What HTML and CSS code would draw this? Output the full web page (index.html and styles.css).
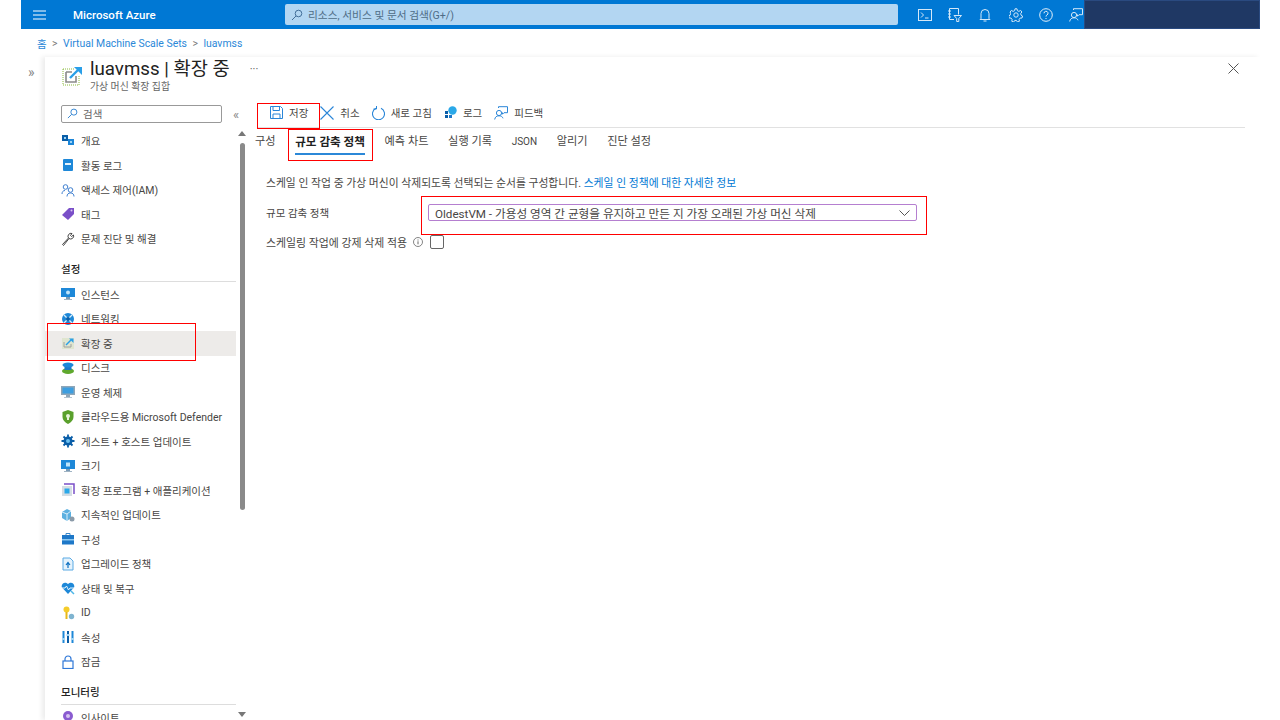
FILE: index.html
```html
<!DOCTYPE html>
<html lang="ko">
<head>
    <meta charset="UTF-8">
    <title>luavmss | 확장 중 - Microsoft Azure</title>
    <link rel="stylesheet" href="styles.css">
</head>
<body>
<div class="page">
    <!-- 상단 바 -->
    <header class="topbar">
        <svg class="hamburger" width="14" height="10" viewBox="0 0 14 10"><path d="M0 1h13M0 5h13M0 9h13" stroke="#fff" stroke-width="1"/></svg>
        <span class="brand">Microsoft Azure</span>
        <div class="globalsearch">
            <svg width="12" height="12" viewBox="0 0 12 12" fill="none" stroke="#44709a"><circle cx="7.5" cy="4.5" r="3.3"/><path d="M5 7l-4 4"/></svg>
            <span>리소스, 서비스 및 문서 검색(G+/)</span>
        </div>
        <div class="topicons">
            <svg width="14" height="14" viewBox="0 0 14 14" fill="none" stroke="#d5e8f8"><rect x=".5" y="1.5" width="13" height="11"/><path d="M3 4.5l2.5 2.500L3 9.500M7 10h3.500"/></svg>
            <svg width="14" height="14" viewBox="0 0 14 14" fill="none" stroke="#d5e8f8"><path d="M1.500 11.500V.5h9v6M1.500 11.500H6M0 3h3M0 6h3M0 9h3M6 7.500h7.500l-2.700 3v3H8.700v-3z"/></svg>
            <svg width="14" height="14" viewBox="0 0 14 14" fill="none" stroke="#d5e8f8"><path d="M3 10.500V5.500a4 4 0 0 1 8 0v5l1 1H2zM5.500 13h3"/></svg>
            <svg width="14" height="14" viewBox="0 0 14 14" fill="none" stroke="#d5e8f8"><circle cx="7" cy="7" r="2.200"/><path d="M6 .8h2l.4 1.900 1.500.7 1.700-1 1.300 1.600-1.200 1.500.3 1.600 1.500.9-.5 2-1.900.1-1 1.300.3 1.900-1.900.7-1.100-1.600h-1.600l-1.100 1.600-1.900-.7.3-1.900-1-1.300-1.900-.1-.5-2 1.500-.9.3-1.600L1.100 4l1.300-1.600 1.700 1 1.500-.7z"/></svg>
            <svg width="14" height="14" viewBox="0 0 14 14" fill="none" stroke="#e4f0fa"><circle cx="7" cy="7" r="6.300"/><path d="M5 5.300a2 2 0 1 1 3 1.700c-.7.4-1 .8-1 1.600M7 10v1"/></svg>
            <svg width="14" height="14" viewBox="0 0 14 14" fill="none" stroke="#d5e8f8"><circle cx="5" cy="7" r="2.600"/><path d="M.7 13.500c.3-2.500 2-3.700 4.300-3.700s3.500 1 4 2.500M4.500 2V.7h9v6H10L8.500 8.200V6.500"/></svg>
        </div>
        <div class="account"></div>
    </header>

    <nav class="breadcrumb">
        <a>홈</a><span class="sep">&gt;</span><a>Virtual Machine Scale Sets</a><span class="sep">&gt;</span><a>luavmss</a>
    </nav>

    <div class="workspace">
        <div class="collapsed">»</div>
        <div class="blade">
            <div class="bladehead">
                <svg class="headicon" width="21" height="21" viewBox="0 0 21 21" fill="none">
                    <path d="M1 4h11M1 4v16h16V10" stroke="#8cbb3f" stroke-dasharray="1 1"/>
                    <path d="M4 7h6M4 7v10h10v-6" stroke="#8a8a8a" stroke-width="1.600"/>
                    <path d="M8 13L17 4" stroke="#2a9fe8" stroke-width="2.400"/>
                    <path d="M12 2h8v8z" fill="#2a9fe8"/>
                </svg>
                <div class="headtext">
                    <h1>luavmss | 확장 중</h1>
                    <p>가상 머신 확장 집합</p>
                </div>
                <span class="more">···</span>
                <svg class="close" width="11" height="11" viewBox="0 0 11 11"><path d="M.5.500l10 10M10.500.500l-10 10" stroke="#555"/></svg>
            </div>

            <div class="bladebody">
                <aside class="sidebar">
                    <div class="sidesearchrow">
                        <div class="sidesearch">
                            <svg width="11" height="11" viewBox="0 0 12 12" fill="none" stroke="#2a7fcf"><circle cx="7.500" cy="4.500" r="3.300"/><path d="M5 7l-4 4"/></svg>
                            <span>검색</span>
                        </div>
                        <span class="collapse">«</span>
                    </div>
                    <ul class="menu">
                        <li><svg viewBox="0 0 14 14"><rect x="1" y="1" width="6" height="6" fill="#0a5ea8"/><rect x="7" y="5" width="6" height="6" fill="#1c86d8"/><rect x="3" y="3" width="2" height="2" fill="#9fd4f5"/><rect x="9" y="7" width="2" height="2" fill="#9fd4f5"/></svg>개요</li>
                        <li><svg viewBox="0 0 14 14"><rect x="2" y="1" width="10" height="12" rx="1" fill="#1e88d8"/><rect x="4" y="5" width="6" height="2" fill="#e8f4fc"/></svg>활동 로그</li>
                        <li><svg viewBox="0 0 14 14" fill="none" stroke="#3f7fd0"><circle cx="4.500" cy="4" r="2.300"/><circle cx="9.500" cy="7" r="2.300"/><path d="M1 11c0-2 1-3.500 3-3.500M6 13.500c0-2.500 1.500-3.500 3.500-3.500s3.500 1 3.500 3.500"/></svg>액세스 제어(IAM)</li>
                        <li><svg viewBox="0 0 14 14"><path d="M1 8l7-7h5v6l-6 6z" fill="#7a4fc8"/><circle cx="10.500" cy="3.500" r="1" fill="#d6c4f0"/></svg>태그</li>
                        <li><svg viewBox="0 0 14 14" fill="none" stroke="#444"><path d="M1.500 12.500l6-6.500a3 3 0 0 1 3.500-4.500L9.500 3.500l1 1 2-1.500a3 3 0 0 1-4.500 3.500l-5.500 7z"/></svg>문제 진단 및 해결</li>
                        <li class="heading">설정</li>
                        <li><svg viewBox="0 0 14 14"><rect x="0" y="1" width="14" height="9" fill="#1e88d8"/><circle cx="7" cy="5.500" r="2" fill="#bfe4fa"/><rect x="5" y="10" width="4" height="2" fill="#7a9ab5"/><rect x="3" y="12" width="8" height="1" fill="#a0b4c4"/></svg>인스턴스</li>
                        <li><svg viewBox="0 0 14 14"><circle cx="7" cy="7" r="6" fill="#1e88d8"/><path d="M3 3l8 8M11 3l-8 8" stroke="#d8eefb" stroke-width="1.300"/><circle cx="7" cy="7" r="2" fill="#0a5ea8"/></svg>네트워킹</li>
                        <li class="selected"><svg viewBox="0 0 14 14" fill="none"><rect x="1" y="2" width="12" height="11" fill="#dfe5cf"/><path d="M3 6v5h7V8" stroke="#a0a0a0"/><path d="M5 9l5-5" stroke="#2a9fe8" stroke-width="1.500"/><path d="M8 2.500h4.500V7z" fill="#2a9fe8"/></svg>확장 중</li>
                        <li><svg viewBox="0 0 14 14"><ellipse cx="7" cy="10" rx="6" ry="3" fill="#5fa82e"/><rect x="3.500" y="3" width="7" height="6" fill="#1e78c8"/><ellipse cx="7" cy="4" rx="5.500" ry="2.500" fill="#1e88d8"/></svg>디스크</li>
                        <li><svg viewBox="0 0 14 14"><rect x="0" y="1" width="14" height="9" fill="#8fa6b8"/><rect x="1.500" y="2.500" width="11" height="6" fill="#3d9ee0"/><rect x="5" y="10" width="4" height="2" fill="#8fa6b8"/><rect x="3" y="12" width="8" height="1" fill="#b5c4d0"/></svg>운영 체제</li>
                        <li><svg viewBox="0 0 14 14"><path d="M7 0l5.500 2v5c0 3-2.500 5.500-5.500 7-3-1.500-5.500-4-5.500-7V2z" fill="#5aa02c"/><circle cx="7" cy="6" r="2" fill="#e6f3d8"/><rect x="6" y="7" width="2" height="3" fill="#e6f3d8"/></svg>클라우드용 Microsoft Defender</li>
                        <li><svg viewBox="0 0 14 14"><circle cx="7" cy="7" r="4.500" fill="#0a5ea8"/><path d="M7 .5v13M.5 7h13M2.500 2.500l9 9M11.500 2.500l-9 9" stroke="#0a5ea8" stroke-width="1.800"/><circle cx="7" cy="7" r="2" fill="#6cc0f0"/></svg>게스트 + 호스트 업데이트</li>
                        <li><svg viewBox="0 0 14 14"><rect x="0" y="1" width="14" height="9" fill="#1e88d8"/><rect x="5" y="3.500" width="4" height="4" fill="#bfe4fa"/><rect x="5" y="10" width="4" height="2" fill="#7a9ab5"/><rect x="3" y="12" width="8" height="1" fill="#a0b4c4"/></svg>크기</li>
                        <li><svg viewBox="0 0 14 14"><path d="M3 1h10v10" fill="none" stroke="#7a4fc8" stroke-width="1.500"/><rect x="1" y="3" width="10" height="10" fill="#d4dde4"/><rect x="3.500" y="5.500" width="5" height="5" fill="#2aa8e8"/></svg>확장 프로그램 + 애플리케이션</li>
                        <li><svg viewBox="0 0 14 14"><path d="M1 4l5-3 4 2v7l-4 3-5-3z" fill="#5cb0e0"/><path d="M6 6v7M1 4l5 2 4-3" stroke="#d8eefb" fill="none"/><circle cx="11" cy="11" r="2.500" fill="#8a9aa8"/></svg>지속적인 업데이트</li>
                        <li><svg viewBox="0 0 14 14"><path d="M5 3V1.500h4V3" fill="none" stroke="#3a86c8"/><rect x="1" y="3" width="12" height="9.500" fill="#1e78c8"/><rect x="1" y="7" width="12" height="1.500" fill="#8cc8f0"/></svg>구성</li>
                        <li><svg viewBox="0 0 14 14"><path d="M2 1h7l3 3v9H2z" fill="#e4f2fc" stroke="#5aaae4"/><path d="M7 11V6M5 8l2-2.500L9 8" fill="none" stroke="#0a6ec0" stroke-width="1.200"/></svg>업그레이드 정책</li>
                        <li><svg viewBox="0 0 14 14"><path d="M7 13L1 6.500C-.5 3.500 3.500-.5 7 3c3.500-3.500 7.500.5 6 3.500z" fill="#1e88d8"/><path d="M1 7h3l1.500-2 2 4L9 7h4" fill="none" stroke="#e4f4fd"/><path d="M10 10l3 3" stroke="#50b8e8" stroke-width="1.500"/></svg>상태 및 복구</li>
                        <li><svg viewBox="0 0 14 14"><circle cx="5.500" cy="3.500" r="3" fill="#f5cc2a"/><rect x="4.500" y="6" width="2" height="7" fill="#e8b818"/><circle cx="10.500" cy="10.500" r="2.700" fill="#7fb4d0"/></svg>ID</li>
                        <li><svg viewBox="0 0 14 14"><rect x="1.500" y="1" width="2" height="12" fill="#1e88d8"/><rect x="6" y="1" width="2" height="12" fill="#0a5ea8"/><rect x="10.500" y="1" width="2" height="12" fill="#1e88d8"/><rect x="1" y="8" width="3" height="2" fill="#9fd4f5"/><rect x="5.500" y="4" width="3" height="2" fill="#9fd4f5"/><rect x="10" y="8" width="3" height="2" fill="#9fd4f5"/></svg>속성</li>
                        <li><svg viewBox="0 0 14 14" fill="none" stroke="#2f78d8" stroke-width="1.200"><rect x="2" y="6" width="10" height="7.500"/><path d="M4 6V4a3 3 0 0 1 6 0v2"/></svg>잠금</li>
                        <li class="heading">모니터링</li>
                        <li><svg viewBox="0 0 14 14"><circle cx="7" cy="6" r="5" fill="#8a5cd0"/><rect x="5" y="10" width="4" height="3" fill="#6a3fb0"/><circle cx="7" cy="6" r="2" fill="#d6c4f0"/></svg>인사이트</li>
                    </ul>
                    <div class="scrollbar">
                        <span class="arrow up"></span>
                        <span class="thumb"></span>
                        <span class="arrow down"></span>
                    </div>
                </aside>

                <main class="content">
                    <div class="toolbar">
                        <button class="tool"><svg width="13" height="13" viewBox="0 0 13 13" fill="none" stroke="#2a86d8"><path d="M.5.500h10l2 2v10H.5z"/><path d="M3 .500v4h6.500v-4M3 12.500V8h7v4.500"/></svg>저장</button>
                        <button class="tool"><svg width="14" height="14" viewBox="0 0 14 14"><path d="M.5.500l13 13M13.500.500l-13 13" stroke="#2a86d8" stroke-width="1.100"/></svg>취소</button>
                        <button class="tool"><svg width="13" height="14" viewBox="0 0 13 14" fill="none" stroke="#2a86d8" stroke-width="1.100"><path d="M4 2.300A6 6 0 1 0 9 2.300"/><path d="M4.500 0v3H1.500" stroke-width="1"/></svg>새로 고침</button>
                        <button class="tool"><svg width="13" height="13" viewBox="0 0 13 13"><circle cx="8.500" cy="4.500" r="4.200" fill="#2aa8e8"/><rect x="1" y="5" width="3" height="3" fill="#0a5ea8"/><rect x="1" y="9" width="3" height="3" fill="#0a5ea8"/><rect x="5" y="9" width="3" height="3" fill="#1e78c8"/></svg>로그</button>
                        <button class="tool"><svg width="14" height="14" viewBox="0 0 14 14" fill="none" stroke="#2a86d8"><circle cx="5" cy="7" r="2.600"/><path d="M.7 13.500c.3-2.500 2-3.700 4.300-3.700s3.500 1 4 2.500M4.500 2V.7h9v6H10L8.500 8.200V6.500"/></svg>피드백</button>
                    </div>
                    <div class="tabs">
                        <a>구성</a>
                        <a class="active">규모 감축 정책</a>
                        <a>예측 차트</a>
                        <a>실행 기록</a>
                        <a class="latin">JSON</a>
                        <a>알리기</a>
                        <a>진단 설정</a>
                    </div>
                    <div class="form">
                        <p class="desc">스케일 인 작업 중 가상 머신이 삭제되도록 선택되는 순서를 구성합니다. <a>스케일 인 정책에 대한 자세한 정보</a></p>
                        <div class="row">
                            <label>규모 감축 정책</label>
                            <div class="select">
                                <span>OldestVM - 가용성 영역 간 균형을 유지하고 만든 지 가장 오래된 가상 머신 삭제</span>
                                <svg width="11" height="6" viewBox="0 0 11 6" fill="none"><path d="M.5.500l5 5 5-5" stroke="#555"/></svg>
                            </div>
                        </div>
                        <div class="row check">
                            <label>스케일링 작업에 강제 삭제 적용</label>
                            <svg class="info" width="10" height="10" viewBox="0 0 10 10" fill="none" stroke="#666"><circle cx="5" cy="5" r="4.500" stroke-width=".8"/><path d="M5 4.300v3M5 2.500v1"/></svg>
                            <span class="checkbox"></span>
                        </div>
                    </div>
                </main>
            </div>
        </div>
    </div>

    <!-- 빨간 강조 표시 -->
    <div class="mark mark-save"></div>
    <div class="mark mark-tab"></div>
    <div class="mark mark-select"></div>
    <div class="mark mark-menu"></div>
</div>
</body>
</html>
```

FILE: styles.css
```css
* {
    box-sizing: border-box;
}

body {
    margin: 0;
    background-color: #fff;
    font-family: Roboto, "Noto Sans CJK KR", sans-serif;
    font-size: 10.5px;
    color: #484644;
}

.page {
    position: relative;
    width: 1239px;
    height: 720px;
    margin-left: 21px;
    overflow: hidden;
}

/* 상단 바 */
.topbar {
    display: flex;
    align-items: center;
    height: 29px;
    background-color: #0078d4;
}

.hamburger {
    margin-left: 12px;
}

.brand {
    width: 212px;
    margin-left: 26px;
    color: #fff;
    font-size: 11.5px;
    font-weight: 500;
}

.globalsearch {
    display: flex;
    align-items: center;
    gap: 5px;
    width: 613px;
    height: 21px;
    padding-left: 6px;
    background-color: #b3d6f2;
    border-radius: 2px;
    color: #4f6d87;
    font-size: 10.7px;
}

.topicons {
    display: flex;
    gap: 16.2px;
    margin-left: 20px;
}

.account {
    position: absolute;
    top: 0;
    right: 0;
    width: 176px;
    height: 29px;
    background-color: #1f3864;
    border: 1px solid #2a4a80;
}

/* 경로 */
.breadcrumb {
    display: flex;
    align-items: center;
    height: 28px;
    padding-left: 16px;
    font-size: 10.45px;
}

.breadcrumb a {
    color: #2b88d8;
}

.sep {
    margin: 0 5.5px;
    color: #777;
}

.workspace {
    display: flex;
    height: 663px;
}

.collapsed {
    width: 24px;
    padding: 6px 0 0 7px;
    color: #888;
    font-size: 14px;
    line-height: 18px;
}

.blade {
    flex: 1;
    box-shadow: -3px 0 5px rgba(0, 0, 0, 0.08);
}

.bladehead {
    position: relative;
    display: flex;
    height: 43px;
    padding-left: 17px;
}

.headicon {
    margin-top: 8px;
}

.headtext {
    margin-left: 7px;
}

h1 {
    margin: 1px 0 0;
    color: #222;
    font-size: 18.7px;
    font-weight: 400;
    line-height: 22px;
}

.headtext p {
    margin: 0;
    color: #666;
    font-size: 9.9px;
    line-height: 14px;
}

.more {
    margin: 6px 0 0 20px;
    color: #555;
    font-size: 11px;
}

.close {
    position: absolute;
    top: 6px;
    right: 21px;
}

.bladebody {
    display: flex;
}

/* 왼쪽 메뉴 */
.sidebar {
    position: relative;
    width: 203px;
    height: 620px;
    overflow: hidden;
}

.sidesearchrow {
    display: flex;
    align-items: center;
    height: 28.5px;
    padding: 5px 0 5px 16px;
}

.sidesearch {
    display: flex;
    align-items: center;
    gap: 5px;
    width: 161px;
    height: 18px;
    padding: 0 0 1px 5px;
    border: 1px solid #999;
    border-radius: 2px;
    color: #666;
}

.collapse {
    margin-left: 11px;
    color: #888;
    font-size: 13px;
}

.menu {
    margin: 0;
    padding: 0;
    list-style: none;
}

.menu li {
    display: flex;
    align-items: center;
    gap: 6px;
    width: 191px;
    height: 24.5px;
    padding-left: 16px;
    white-space: nowrap;
}

.menu li svg {
    flex: none;
    width: 14px;
    height: 14px;
}

.menu li.selected {
    background-color: #edebe9;
}

.menu li.heading {
    display: block;
    width: 175px;
    height: 31px;
    margin-left: 16px;
    padding: 12px 0 0;
    border-bottom: 1px solid #ddd;
    color: #222;
    font-weight: 500;
    line-height: 14px;
}

.scrollbar {
    position: absolute;
    top: 28px;
    right: 2px;
    width: 8px;
    height: 592px;
}

.thumb {
    position: absolute;
    top: 15px;
    left: 2px;
    width: 5px;
    height: 367px;
    background-color: #8a8a8a;
    border-radius: 3px;
}

.arrow {
    position: absolute;
    left: 0;
    border-left: 4px solid transparent;
    border-right: 4px solid transparent;
}

.arrow.up {
    top: 3px;
    border-bottom: 5px solid #777;
}

.arrow.down {
    top: 584px;
    border-top: 5px solid #777;
}

/* 본문 */
.content {
    flex: 1;
    padding-right: 15px;
}

.toolbar {
    display: flex;
    align-items: center;
    gap: 12px;
    height: 28px;
    margin-left: 9px;
    padding: 0 0 2px 13px;
    border-bottom: 1px solid #e1e1e1;
}

.tool {
    display: flex;
    align-items: center;
    gap: 6px;
    padding: 0;
    border: 0;
    background: none;
    color: #484644;
    font: inherit;
    font-size: 10.5px;
}

.tabs {
    display: flex;
    gap: 19.6px;
    height: 27px;
    margin-left: 7px;
    line-height: 28px;
    font-size: 11.2px;
}

.tabs a {
    height: 27px;
    white-space: nowrap;
}

.tabs a.latin {
    font-size: 10px;
}

.tabs a.active {
    color: #222;
    font-size: 11.6px;
    font-weight: 700;
    border-bottom: 2px solid #2b88d8;
}

.form {
    padding: 21px 0 0 18px;
}

.desc {
    margin: 0;
    font-size: 10.8px;
    line-height: 16px;
}

.desc a {
    color: #0078d4;
}

.row {
    display: flex;
    align-items: center;
    margin-top: 12px;
}

.row label {
    width: 162px;
}

.select {
    display: flex;
    align-items: center;
    justify-content: space-between;
    width: 489px;
    height: 17px;
    padding: 0 6px;
    border: 1px solid #b57fd0;
    border-radius: 2px;
    font-size: 11.65px;
    white-space: nowrap;
}

.row.check {
    margin-top: 13px;
}

.row.check label {
    width: auto;
    font-size: 10.9px;
}

.info {
    margin-left: 6px;
}

.checkbox {
    width: 14px;
    height: 14px;
    margin-left: 7px;
    border: 1px solid #666;
    border-radius: 2px;
}

/* 빨간 상자 */
.mark {
    position: absolute;
    border: 1px solid #f00;
}

.mark-save {
    left: 236px;
    top: 103px;
    width: 63px;
    height: 26px;
}

.mark-tab {
    left: 267px;
    top: 129px;
    width: 85px;
    height: 32px;
}

.mark-select {
    left: 400px;
    top: 196px;
    width: 506px;
    height: 39px;
}

.mark-menu {
    left: 26px;
    top: 323px;
    width: 149px;
    height: 38px;
}
```
